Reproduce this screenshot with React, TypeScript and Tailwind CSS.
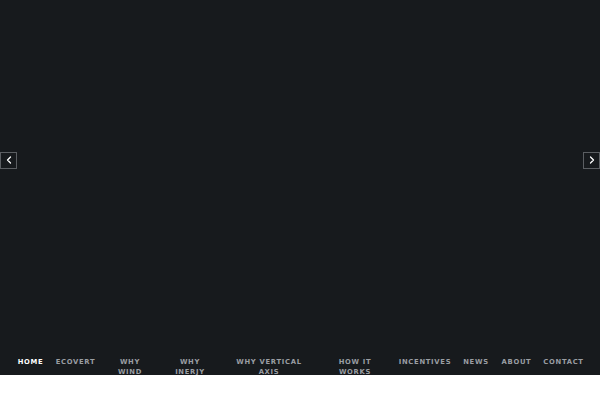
import { ChevronLeft, ChevronRight } from "lucide-react";

const navItems = [
  { lines: ["HOME"], w: "w-[39px]", active: true },
  { lines: ["ECOVERT"], w: "w-[51px]" },
  { lines: ["WHY", "WIND"], w: "w-[58px]" },
  { lines: ["WHY", "INERJY"], w: "w-[62px]" },
  { lines: ["WHY VERTICAL", "AXIS"], w: "w-[96px]" },
  { lines: ["HOW IT", "WORKS"], w: "w-[76px]" },
  { lines: ["INCENTIVES"], w: "w-[64px]" },
  { lines: ["NEWS"], w: "w-[38px]" },
  { lines: ["ABOUT"], w: "w-[43px]" },
  { lines: ["CONTACT"], w: "w-[51px]" },
];

export default function App() {
  return (
    <div className="h-[400px] w-[600px] bg-white font-['DejaVu_Sans',sans-serif]">
      <div className="flex h-[375px] flex-col overflow-hidden bg-[#171a1d]">
        <div className="flex h-[320px] shrink-0 items-center justify-between">
          <button className="flex h-[17px] w-[17px] items-center justify-center border border-[#5b5e62] text-white">
            <ChevronLeft className="h-[12px] w-[12px]" strokeWidth={2.5} />
          </button>
          <button className="flex h-[17px] w-[17px] items-center justify-center border border-[#5b5e62] text-white">
            <ChevronRight className="h-[12px] w-[12px]" strokeWidth={2.5} />
          </button>
        </div>
        <nav className="flex shrink-0 justify-center pt-[37px]">
          {navItems.map((item) => (
            <a
              key={item.lines[0]}
              className={`${item.w} flex flex-col items-center whitespace-nowrap px-2 text-center text-[6.8px] font-bold leading-[10px] tracking-[0.7px] ${
                item.active ? "text-white" : "text-[#9a9ea3]"
              }`}
            >
              {item.lines.map((l) => (
                <span key={l}>{l}</span>
              ))}
            </a>
          ))}
        </nav>
      </div>
    </div>
  );
}
